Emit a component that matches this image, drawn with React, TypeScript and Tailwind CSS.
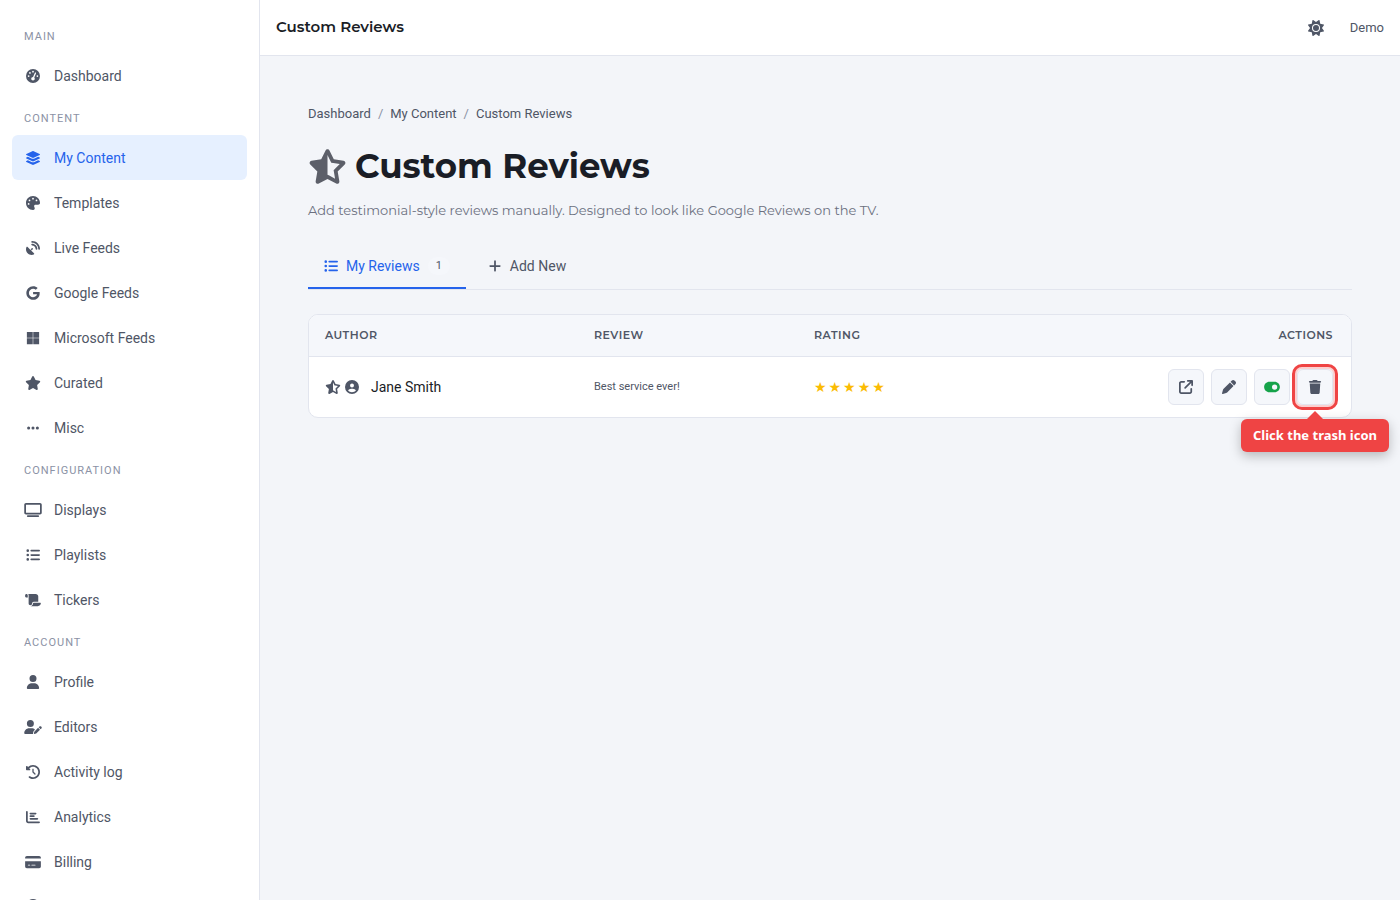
import React, { useState } from 'react';
import type { IconType } from 'react-icons';
import {
  FaArrowUpRightFromSquare,
  FaChartBar,
  FaCircleQuestion,
  FaCircleUser,
  FaClockRotateLeft,
  FaCreditCard,
  FaEllipsis,
  FaGaugeHigh,
  FaGoogle,
  FaLayerGroup,
  FaListUl,
  FaMicrosoft,
  FaPalette,
  FaPen,
  FaPlus,
  FaSatelliteDish,
  FaScroll,
  FaStar,
  FaStarHalfStroke,
  FaSun,
  FaToggleOn,
  FaTrash,
  FaTv,
  FaUser,
  FaUserPen,
} from 'react-icons/fa6';

interface NavItem {
  label: string;
  icon: IconType;
}

interface NavSection {
  title: string;
  items: NavItem[];
}

interface Review {
  id: number;
  author: string;
  text: string;
  rating: number;
}

const sections: NavSection[] = [
  { title: 'Main', items: [{ label: 'Dashboard', icon: FaGaugeHigh }] },
  {
    title: 'Content',
    items: [
      { label: 'My Content', icon: FaLayerGroup },
      { label: 'Templates', icon: FaPalette },
      { label: 'Live Feeds', icon: FaSatelliteDish },
      { label: 'Google Feeds', icon: FaGoogle },
      { label: 'Microsoft Feeds', icon: FaMicrosoft },
      { label: 'Curated', icon: FaStar },
      { label: 'Misc', icon: FaEllipsis },
    ],
  },
  {
    title: 'Configuration',
    items: [
      { label: 'Displays', icon: FaTv },
      { label: 'Playlists', icon: FaListUl },
      { label: 'Tickers', icon: FaScroll },
    ],
  },
  {
    title: 'Account',
    items: [
      { label: 'Profile', icon: FaUser },
      { label: 'Editors', icon: FaUserPen },
      { label: 'Activity log', icon: FaClockRotateLeft },
      { label: 'Analytics', icon: FaChartBar },
      { label: 'Billing', icon: FaCreditCard },
    ],
  },
];

const reviews: Review[] = [
  { id: 1, author: 'Jane Smith', text: 'Best service ever!', rating: 5 },
];

const Sidebar: React.FC = () => (
  <aside className="w-[260px] shrink-0 overflow-hidden border-r border-[#e2e5ee] bg-white px-3 pt-4">
    <nav>
      {sections.map(section => (
        <div key={section.title}>
          <h2 className="h-[37px] px-3 pt-[13px] text-[11px] leading-4 tracking-[1px] text-[#8b92a5] uppercase">
            {section.title}
          </h2>
          {section.items.map(({ label, icon: Icon }) => {
            const active = label === 'My Content';
            return (
              <a
                key={label}
                href="#"
                aria-current={active ? 'page' : undefined}
                className={`flex h-[45px] items-center gap-3 rounded-md px-3 text-sm ${
                  active ? 'bg-[#e6f0ff] text-[#2563eb]' : 'text-[#4f5666]'
                }`}
              >
                <Icon className="h-[14px] w-[18px] shrink-0" />
                {label}
              </a>
            );
          })}
        </div>
      ))}
      <a href="#" aria-label="Help" className="flex h-[43px] items-center px-3 text-[#4f5666]">
        <FaCircleQuestion className="h-[14px] w-[18px]" />
      </a>
    </nav>
  </aside>
);

const ActionButton: React.FC<{ label: string; children: React.ReactNode }> = ({ label, children }) => (
  <button
    type="button"
    aria-label={label}
    className="flex size-9 items-center justify-center rounded-md border border-[#e2e5ee] bg-[#f5f7fb] text-[#4f5666]"
  >
    {children}
  </button>
);

const ReviewsTable: React.FC = () => (
  <div className="rounded-[10px] border border-[#e2e5ee] bg-white">
    <table className="w-full table-fixed text-left">
      <thead>
        <tr className="h-[41px] font-[Montserrat,Inter,sans-serif] text-[11px] tracking-[0.5px] text-[#4f5666] uppercase">
          <th className="w-[269px] rounded-tl-[9px] border-b border-[#e2e5ee] bg-[#f5f7fb] px-4 font-semibold">Author</th>
          <th className="w-[220px] border-b border-[#e2e5ee] bg-[#f5f7fb] px-4 font-semibold">Review</th>
          <th className="border-b border-[#e2e5ee] bg-[#f5f7fb] px-4 font-semibold">Rating</th>
          <th className="rounded-tr-[9px] border-b border-[#e2e5ee] bg-[#f5f7fb] px-[18px] text-right font-semibold">Actions</th>
        </tr>
      </thead>
      <tbody>
        {reviews.map(review => (
          <tr key={review.id} className="h-[61px]">
            <td className="px-4">
              <div className="flex items-center text-sm text-[#1a1d26]">
                <FaStarHalfStroke className="mr-1 h-[14px] w-4 text-[#4f5666]" />
                <FaCircleUser className="mr-3 size-[14px] text-[#4f5666]" />
                {review.author}
              </div>
            </td>
            <td className="px-4 text-[11px] text-[#4f5666]">{review.text}</td>
            <td className="px-4">
              <span className="font-['DejaVu_Sans',sans-serif] text-[14px] tracking-[2px] text-[#fbbc04]">
                {'★'.repeat(review.rating)}
              </span>
            </td>
            <td className="px-[18px]">
              <div className="flex justify-end gap-[7px]">
                <ActionButton label="Open">
                  <FaArrowUpRightFromSquare className="size-[14px]" />
                </ActionButton>
                <ActionButton label="Edit">
                  <FaPen className="size-[14px]" />
                </ActionButton>
                <ActionButton label="Toggle visibility">
                  <FaToggleOn className="h-[14px] w-4 text-[#16a34a]" />
                </ActionButton>
                <div className="relative">
                  <ActionButton label="Delete">
                    <FaTrash className="size-[14px]" />
                  </ActionButton>
                  <span className="pointer-events-none absolute -inset-[5px] rounded-[10px] border-3 border-[#ef4444] shadow-[inset_0_0_0_2px_rgba(239,68,68,0.25)]" />
                  <div
                    role="tooltip"
                    className="absolute top-[50px] left-1/2 -translate-x-1/2 rounded-md bg-[#ef4444] px-3 py-2 font-['Noto_Sans',sans-serif] text-[13px] leading-[17px] font-bold whitespace-nowrap text-white shadow-[0_4px_12px_rgba(0,0,0,0.25)]"
                  >
                    <span className="absolute bottom-full left-1/2 -translate-x-1/2 border-x-8 border-b-8 border-x-transparent border-b-[#ef4444]" />
                    Click the trash icon
                  </div>
                </div>
              </div>
            </td>
          </tr>
        ))}
      </tbody>
    </table>
  </div>
);

const App: React.FC = () => {
  const [tab, setTab] = useState<'list' | 'add'>('list');

  return (
    <div className="flex h-screen overflow-hidden bg-[#f3f5f9] font-[Roboto,sans-serif] text-[#4f5666]">
      <Sidebar />
      <div className="min-w-0 flex-1">
        <header className="flex h-14 items-center justify-between border-b border-[#e2e5ee] bg-white px-4">
          <span className="font-[Montserrat,Inter,sans-serif] text-[15px] font-semibold text-[#1a1d26]">Custom Reviews</span>
          <div className="flex items-center gap-[26px]">
            <button type="button" aria-label="Toggle theme">
              <FaSun className="size-4" />
            </button>
            <a href="#" className="text-[13px]">Demo</a>
          </div>
        </header>

        <main className="p-12">
          <nav aria-label="Breadcrumb" className="flex gap-[7px] text-[13px] leading-5">
            <a href="#">Dashboard</a>
            <span className="text-[#8b92a5]">/</span>
            <a href="#">My Content</a>
            <span className="text-[#8b92a5]">/</span>
            <span>Custom Reviews</span>
          </nav>

          <h1 className="mt-5 flex items-center gap-2 font-[Montserrat,Inter,sans-serif] text-[34px] leading-[44px] font-bold text-[#1a1d26]">
            <FaStarHalfStroke className="h-[35px] w-[39px] text-[#5c5f69]" />
            Custom Reviews
          </h1>
          <p className="mt-3 font-[Montserrat,Inter,sans-serif] text-[13px] leading-5 text-[#6b7080]">
            Add testimonial-style reviews manually. Designed to look like Google Reviews on the TV.
          </p>

          {/* Tabs */}
          <div role="tablist" className="mt-6 flex h-[46px] border-b border-[#e2e5ee] text-sm">
            <button
              type="button"
              role="tab"
              aria-selected={tab === 'list'}
              onClick={() => setTab('list')}
              className={`flex items-center gap-2 border-b-2 px-4 ${
                tab === 'list' ? 'border-[#2563eb] text-[#2563eb]' : 'border-transparent'
              }`}
            >
              <FaListUl className="size-[14px]" />
              My Reviews
              <span className="rounded-full bg-[#f5f7fb] px-2 text-[11px] leading-[18px] text-[#4f5666]">1</span>
            </button>
            <button
              type="button"
              role="tab"
              aria-selected={tab === 'add'}
              onClick={() => setTab('add')}
              className={`flex items-center gap-2 border-b-2 px-[22px] ${
                tab === 'add' ? 'border-[#2563eb] text-[#2563eb]' : 'border-transparent'
              }`}
            >
              <FaPlus className="size-[14px]" />
              Add New
            </button>
          </div>

          <div className="mt-6">
            <ReviewsTable />
          </div>
        </main>
      </div>
    </div>
  );
};

export default App;
